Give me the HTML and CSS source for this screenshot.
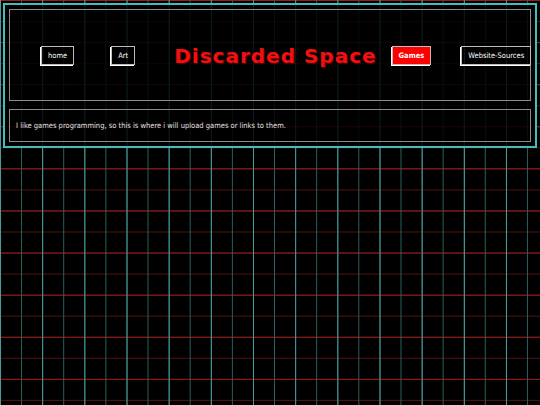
FILE: index.html
```html
<!DOCTYPE html>
<html lang="en">
<head>
    <meta charset="UTF-8">
    <meta name="viewport" content="width=device-width, initial-scale=1.0">
    <title>Discarded Space - Games</title>
    <link rel="stylesheet" href="styles.css">
</head>
<body>
    <div class="wrapper">
        <!-- Header / navigation -->
        <div class="header-box">
            <a class="nav-btn nav-home" href="#">home</a>
            <a class="nav-btn nav-art" href="#">Art</a>
            <h1 class="site-title">Discarded Space</h1>
            <a class="nav-btn nav-games active" href="#">Games</a>
            <a class="nav-btn nav-sources" href="#">Website-Sources</a>
        </div>

        <!-- Page content -->
        <div class="content-box">
            <p>I like games programming, so this is where i will upload games or links to them.</p>
        </div>
    </div>
</body>
</html>
```

FILE: styles.css
```css
:root {
    --grid-cyan: #4a9c9c;
    --grid-cyan-dim: #2a6262;
    --grid-red: #981c1c;
    --grid-red-dim: #581212;
    --frame-cyan: #44bcbc;
    --box-grey: #8c8c8c;
    --title-red: #f01010;
}

html {
    height: 100%;
}

body {
    margin: 0;
    padding: 3px;
    min-height: 100%;
    box-sizing: border-box;
    font-family: 'DejaVu Sans Condensed', 'DejaVu Sans', Verdana, sans-serif;
    color: #e6e6e6;
    background-color: #000000;
    background-image:
        linear-gradient(to right, var(--grid-cyan) 1px, transparent 1px),
        linear-gradient(to right, var(--grid-cyan-dim) 1px, transparent 1px),
        linear-gradient(to bottom, var(--grid-red) 1px, transparent 1px),
        linear-gradient(to bottom, var(--grid-red-dim) 1px, transparent 1px);
    background-size:
        42.18px 100%,
        21.09px 100%,
        100% 42.1px,
        100% 21.05px;
}

.wrapper {
    border: 2px solid var(--frame-cyan);
    padding: 4px;
    background-color: rgba(0, 0, 0, 0.84);
}

.header-box {
    height: 89px;
    border: 1px solid var(--box-grey);
    display: flex;
    align-items: center;
    padding-top: 1px;
}

.nav-btn {
    display: inline-block;
    font-size: 7.5px;
    line-height: 9px;
    padding: 4px 6px;
    color: #ffffff;
    text-decoration: none;
    border: 1px solid #bdbdbd;
    box-shadow: -1px 1px 0 #ffffff;
    white-space: nowrap;
}

.nav-btn.active {
    background-color: #ff0000;
    font-weight: bold;
}

.nav-home {
    margin-left: 31px;
}

.nav-art {
    margin-left: 37px;
}

.site-title {
    margin: 0 0 0 39px;
    font-family: 'DejaVu Sans', Verdana, sans-serif;
    font-size: 20px;
    font-weight: bold;
    letter-spacing: 1px;
    color: var(--title-red);
    text-shadow: 1px 1px 0 #5a0000;
    white-space: nowrap;
}

.nav-games {
    margin-left: 15px;
}

.nav-sources {
    margin-left: 30px;
}

.content-box {
    margin-top: 8px;
    border: 1px solid var(--box-grey);
    height: 31px;
    display: flex;
    align-items: center;
    padding: 0 6px;
}

.content-box p {
    margin: 0;
    font-size: 7.5px;
    color: #e0e0e0;
}
```
